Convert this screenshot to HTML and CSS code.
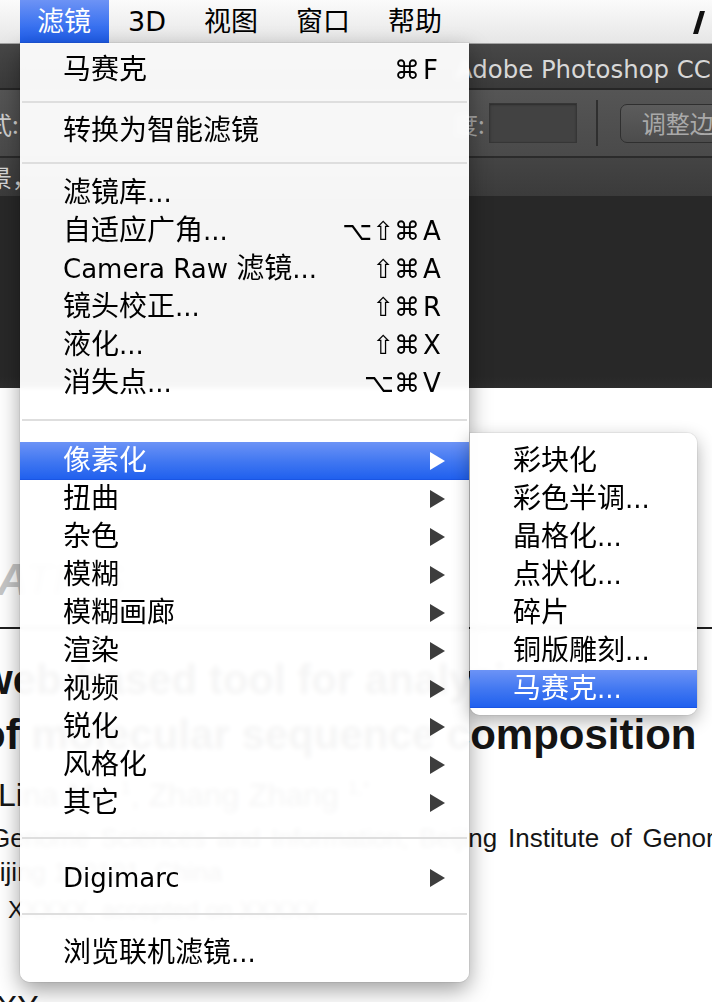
FILE: index.html
```html
<!DOCTYPE html>
<html lang="zh-CN">
<head>
<meta charset="utf-8">
<title>滤镜菜单</title>
<link rel="stylesheet" href="styles.css">
</head>
<body>
<div class="screen">
  <header class="menubar">
    <span class="mb-frag"><span>：</span></span>
    <span class="mb-item active">滤镜</span>
    <span class="mb-item">3D</span>
    <span class="mb-item">视图</span>
    <span class="mb-item">窗口</span>
    <span class="mb-item">帮助</span>
    <svg class="mb-logo" width="16" height="43" viewBox="0 0 16 43"><polygon points="8,11 13,11 6,34 1,34" fill="#111"/></svg>
  </header>

  <div class="ps-title"><span>Adobe Photoshop CC</span></div>

  <div class="ps-options">
    <div class="opt-left"><span class="opt-lbl cut">式:</span></div>
    <span class="opt-lbl">度:</span>
    <span class="opt-input"></span>
    <span class="opt-sep"></span>
    <span class="opt-btn">调整边缘...</span>
  </div>

  <div class="ps-info"><span class="cut">景，</span></div>
  <div class="ps-canvas"></div>

  <main class="doc">
    <div class="journal">ATICS</div>
    <div class="rule"></div>
    <div class="title t1">web-based tool for analyzing</div>
    <div class="title t2">of molecular sequence composition</div>
    <div class="authors">Lina Ma <sup>1</sup>, Zhang Zhang <sup>1,*</sup></div>
    <div class="affil">Genome Sciences and Information, Beijing Institute of Genomics</div>
    <div class="city">Beijing 100101, China</div>
    <div class="dates">XXXXX, accepted on XXXXX</div>
    <div class="xy">XY</div>
  </main>

  <nav class="menu">
    <div class="mi"><span class="lbl">马赛克</span><span class="sc"><span class="mods">⌘</span><span class="key">F</span></span></div>
    <div class="sep s1"></div>
    <div class="mi"><span class="lbl">转换为智能滤镜</span></div>
    <div class="sep s2"></div>
    <div class="mi"><span class="lbl">滤镜库<i>...</i></span></div>
    <div class="mi"><span class="lbl">自适应广角<i>...</i></span><span class="sc"><span class="mods">⌥⇧⌘</span><span class="key">A</span></span></div>
    <div class="mi"><span class="lbl"><i>Camera Raw </i>滤镜<i>...</i></span><span class="sc"><span class="mods">⇧⌘</span><span class="key">A</span></span></div>
    <div class="mi"><span class="lbl">镜头校正<i>...</i></span><span class="sc"><span class="mods">⇧⌘</span><span class="key">R</span></span></div>
    <div class="mi"><span class="lbl">液化<i>...</i></span><span class="sc"><span class="mods">⇧⌘</span><span class="key">X</span></span></div>
    <div class="mi"><span class="lbl">消失点<i>...</i></span><span class="sc"><span class="mods">⌥⌘</span><span class="key">V</span></span></div>
    <div class="sep s3"></div>
    <div class="mi hl"><span class="lbl">像素化</span><span class="arrow"></span></div>
    <div class="mi"><span class="lbl">扭曲</span><span class="arrow"></span></div>
    <div class="mi"><span class="lbl">杂色</span><span class="arrow"></span></div>
    <div class="mi"><span class="lbl">模糊</span><span class="arrow"></span></div>
    <div class="mi"><span class="lbl">模糊画廊</span><span class="arrow"></span></div>
    <div class="mi"><span class="lbl">渲染</span><span class="arrow"></span></div>
    <div class="mi"><span class="lbl">视频</span><span class="arrow"></span></div>
    <div class="mi"><span class="lbl">锐化</span><span class="arrow"></span></div>
    <div class="mi"><span class="lbl">风格化</span><span class="arrow"></span></div>
    <div class="mi"><span class="lbl">其它</span><span class="arrow"></span></div>
    <div class="sep s4"></div>
    <div class="mi"><span class="lbl"><i>Digimarc</i></span><span class="arrow"></span></div>
    <div class="sep s5"></div>
    <div class="mi"><span class="lbl">浏览联机滤镜<i>...</i></span></div>
  </nav>

  <nav class="submenu">
    <div class="mi"><span class="lbl">彩块化</span></div>
    <div class="mi"><span class="lbl">彩色半调<i>...</i></span></div>
    <div class="mi"><span class="lbl">晶格化<i>...</i></span></div>
    <div class="mi"><span class="lbl">点状化<i>...</i></span></div>
    <div class="mi"><span class="lbl">碎片</span></div>
    <div class="mi"><span class="lbl">铜版雕刻<i>...</i></span></div>
    <div class="mi hl"><span class="lbl">马赛克<i>...</i></span></div>
  </nav>
</div>
</body>
</html>
```

FILE: styles.css
```css
* { box-sizing: border-box; margin: 0; padding: 0; }

html, body {
  width: 712px;
  height: 1002px;
  overflow: hidden;
  background: #fff;
}

body {
  font-family: "DejaVu Sans", "Noto Sans CJK SC", sans-serif;
  color: #000;
}

.screen {
  position: relative;
  width: 712px;
  height: 1002px;
  overflow: hidden;
  display: flex;
  flex-direction: column;
}

/* ---------- macOS menu bar ---------- */
.menubar {
  flex: none;
  height: 44px;
  display: flex;
  align-items: stretch;
  background: linear-gradient(#fbfbfb, #e6e6e6);
  border-bottom: 1px solid #a2a2a2;
  font-size: 27px;
  line-height: 43px;
  white-space: nowrap;
}

.mb-frag {
  width: 20px;
  overflow: hidden;
  display: flex;
  color: #666;
}
.mb-frag span { margin-left: -14px; }

.mb-item {
  padding: 0 19px 0 19px;
  display: flex;
  align-items: center;
}
.mb-item.active {
  color: #fff;
  background: linear-gradient(#6d93f5, #3a72f0 60%, #1d5be8);
  padding: 0 18px 0 17px;
}

.mb-logo { margin-left: auto; margin-right: 4px; }

/* ---------- Photoshop chrome ---------- */
.ps-title {
  flex: none;
  height: 46px;
  background: linear-gradient(#474747, #3a3a3a);
  border-bottom: 2px solid #262626;
  color: #d8d8d8;
  font-size: 24.4px;
  line-height: 44px;
  padding-top: 4px;
  padding-left: 456px;
  white-space: nowrap;
}

.ps-options {
  flex: none;
  height: 68px;
  display: flex;
  align-items: center;
  background: linear-gradient(#555555, #4a4a4a);
  border-bottom: 2px solid #2b2b2b;
  white-space: nowrap;
  font-family: "Noto Sans CJK SC", sans-serif;
}
.opt-left { width: 454px; flex: none; display: flex; }
.opt-lbl { color: #a8a8a8; font-size: 24px; }
.opt-lbl.cut { color: #d0d0d0; margin-left: -12px; }
.opt-input {
  flex: none;
  width: 88px;
  height: 40px;
  margin-left: 4px;
  background: #424242;
  border: 1px solid #363636;
  box-shadow: inset 0 1px 2px rgba(0,0,0,.35);
}
.opt-sep {
  flex: none;
  width: 2px;
  height: 46px;
  margin-left: 19px;
  background: #2f2f2f;
}
.opt-btn {
  flex: none;
  width: 150px;
  height: 39px;
  margin-left: 22px;
  padding-left: 21px;
  border: 1px solid #2f2f2f;
  border-radius: 7px;
  background: linear-gradient(#5c5c5c, #4c4c4c);
  color: #a9a9a9;
  font-size: 24px;
  line-height: 36px;
}

.ps-info {
  flex: none;
  height: 38px;
  background: linear-gradient(#444444, #3b3b3b);
  color: #d8d8d8;
  font-family: "Noto Sans CJK SC", sans-serif;
  font-size: 24px;
  line-height: 38px;
  white-space: nowrap;
}
.ps-info .cut { margin-left: -12px; }

.ps-canvas {
  flex: none;
  height: 192px;
  background: linear-gradient(#282828 94%, #2d2d2d);
}

/* ---------- document behind the menu ---------- */
.doc {
  flex: 1;
  background: #fff;
  padding-top: 170px;
  font-family: "Liberation Sans", Arial, sans-serif;
  color: #151515;
  white-space: nowrap;
  display: flex;
  flex-direction: column;
}
.journal {
  font-size: 44px;
  font-weight: bold;
  font-style: italic;
  line-height: 44px;
  color: #c6c6c6;
  margin-left: -3px;
}
.rule {
  height: 2px;
  margin-top: 25px;
  background: #1e1e1e;
}
.title {
  font-size: 42px;
  font-weight: bold;
  line-height: 55px;
}
.t1 { margin-top: 23px; margin-left: -20px; }
.t2 { margin-left: -20px; }
.authors {
  font-size: 32px;
  line-height: 40px;
  margin-top: 13px;
  margin-left: -2px;
}
.authors sup { font-size: 18px; vertical-align: 12px; line-height: 0; }
.affil {
  font-size: 26px;
  line-height: 34px;
  margin-top: 6px;
  margin-left: -10px;
  word-spacing: 3.6px;
}
.city {
  font-size: 26px;
  line-height: 34px;
  margin-left: -32px;
}
.dates {
  font-size: 24px;
  line-height: 32px;
  margin-top: 5px;
  margin-left: 8px;
}
.xy {
  font-size: 32px;
  line-height: 40px;
  margin-top: 61px;
  margin-left: -4px;
}

/* ---------- menus ---------- */
.menu, .submenu {
  position: absolute;
  background: rgba(255, 255, 255, 0.955);
  -webkit-backdrop-filter: blur(2.5px);
  backdrop-filter: blur(2.5px);
  font-size: 28px;
  white-space: nowrap;
}

.menu {
  left: 20px;
  top: 43px;
  width: 449px;
  height: 939px;
  padding: 8px 0 10px;
  border-radius: 0 0 10px 10px;
  box-shadow: 0 8px 22px rgba(0,0,0,.38), 0 0 0 1px rgba(0,0,0,.06);
}

.submenu {
  left: 470px;
  top: 433px;
  width: 227px;
  height: 282px;
  padding: 9px 0 7px;
  border-radius: 0 10px 10px 10px;
  box-shadow: 0 6px 18px rgba(0,0,0,.32), 0 0 0 1px rgba(0,0,0,.05);
}

.mi {
  height: 38px;
  display: flex;
  align-items: center;
  padding: 0 24px 0 43px;
  line-height: 38px;
}
.mi .lbl { flex: 1; }
.mi i { font-style: normal; font-size: 26px; }

.mi.hl {
  color: #fff;
  background: linear-gradient(#6c93f6, #3f76f1 55%, #2060ee);
  border-bottom: 1px solid #1a55e4;
}

.sc { display: flex; font-size: 26px; }
.mods { margin-right: 3px; }
.key { width: 22px; }

.arrow {
  width: 0;
  height: 0;
  border-left: 15px solid #3d3d3d;
  border-top: 9px solid transparent;
  border-bottom: 9px solid transparent;
}
.mi.hl .arrow { border-left-color: #fff; }

.sep {
  display: flex;
  align-items: flex-start;
  padding-left: 2px;
  padding-right: 2px;
}
.sep::before {
  content: "";
  flex: 1;
  height: 2px;
  background: #dedede;
}
.s1 { height: 23px; padding-top: 12px; }
.s2 { height: 24px; padding-top: 12px; }
.s3 { height: 40px; padding-top: 17px; }
.s4 { height: 37px; padding-top: 15px; }
.s5 { height: 37px; padding-top: 16px; }
```
